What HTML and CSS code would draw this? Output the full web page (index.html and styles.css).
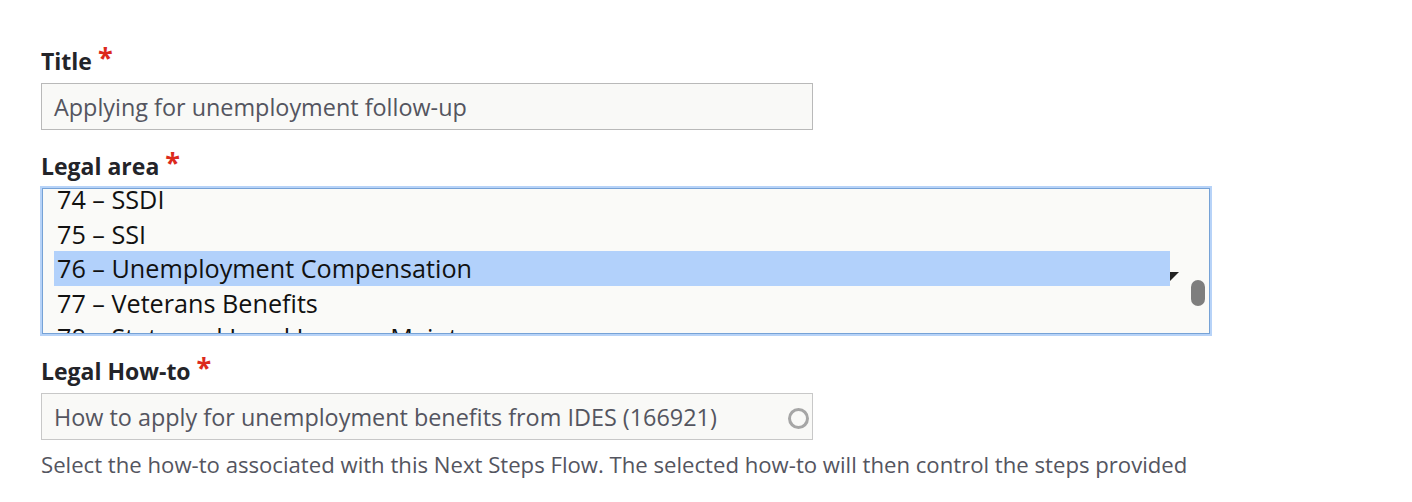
FILE: index.html
```html
<!DOCTYPE html>
<html>
<head>
<meta charset="utf-8">
<link rel="stylesheet" href="styles.css">
</head>
<body>
<form class="form">
  <div class="field">
    <label class="label">Title <span class="req">*</span></label>
    <div class="input"><span class="value">Applying for unemployment follow-up</span></div>
  </div>
  <div class="field field-select">
    <label class="label">Legal area <span class="req">*</span></label>
    <div class="listbox">
      <div class="list-scroll">
        <ul class="options">
          <li class="option">74 – SSDI</li>
          <li class="option">75 – SSI</li>
          <li class="option selected">76 – Unemployment Compensation</li>
          <li class="option">77 – Veterans Benefits</li>
          <li class="option">78 – State and Local Income Maintenance</li>
        </ul>
      </div>
      <div class="scroll-side">
        <span class="tri"></span>
        <span class="thumb"></span>
      </div>
    </div>
  </div>
  <div class="field">
    <label class="label">Legal How-to <span class="req">*</span></label>
    <div class="input autocomplete"><span class="value">How to apply for unemployment benefits from IDES (166921)</span><span class="throbber"></span></div>
    <p class="desc">Select the how-to associated with this Next Steps Flow. The selected how-to will then control the steps provided</p>
  </div>
</form>
</body>
</html>
```

FILE: styles.css
```css
html, body {
  margin: 0;
  padding: 0;
  background: #ffffff;
}
body {
  font-family: "Open Sans", "Noto Sans", sans-serif;
  color: #232429;
}
.form {
  padding: 47px 0 0 41px;
}
.field {
  margin-bottom: 22px;
}
.field-select {
  margin-bottom: 23px;
}
.label {
  display: block;
  font-weight: 700;
  font-size: 23px;
  line-height: 28px;
  color: #232429;
  margin-bottom: 8px;
  white-space: nowrap;
}
.req {
  color: #dc2a1c;
  font-size: 27px;
  line-height: 20px;
  vertical-align: 3px;
}
.input {
  box-sizing: border-box;
  width: 772px;
  height: 47px;
  border: 1px solid #b9b9b9;
  background: #f9f9f7;
  display: flex;
  align-items: center;
  padding: 0 12px;
  font-size: 23.4px;
  color: #545560;
  white-space: nowrap;
}
.autocomplete {
  justify-content: space-between;
  border-color: #c8c8c8;
}
.throbber {
  box-sizing: border-box;
  width: 21px;
  height: 21px;
  border: 3.5px solid #a6a6a6;
  border-radius: 50%;
  margin-right: -9px;
  margin-top: 3px;
  filter: blur(0.4px);
}
.listbox {
  box-sizing: border-box;
  width: 1168px;
  height: 146px;
  border: 1px solid #76a2d6;
  box-shadow: 0 0 0 2px #b7d3f8;
  background: #fafaf8;
  margin-left: 1px;
  display: flex;
  overflow: hidden;
}
.list-scroll {
  flex: 1;
  overflow: hidden;
  padding-left: 11px;
}
.options {
  list-style: none;
  margin: -7px 0 0 0;
  padding: 0;
}
.option {
  height: 34.5px;
  line-height: 34.5px;
  padding-left: 3px;
  font-size: 25.2px;
  color: #111;
  white-space: nowrap;
}
.option.selected {
  background: #b2d1fb;
}
.scroll-side {
  width: 39px;
  position: relative;
}
.tri {
  position: absolute;
  left: 0;
  top: 83px;
  width: 0;
  height: 0;
  border-top: 9px solid #222;
  border-right: 9px solid transparent;
}
.thumb {
  position: absolute;
  left: 21px;
  top: 91px;
  width: 14px;
  height: 26px;
  border-radius: 7px;
  background: #7e7e7e;
}
.desc {
  margin: 10px 0 0 0;
  font-size: 22.15px;
  line-height: 28px;
  color: #545560;
  white-space: nowrap;
}
```
